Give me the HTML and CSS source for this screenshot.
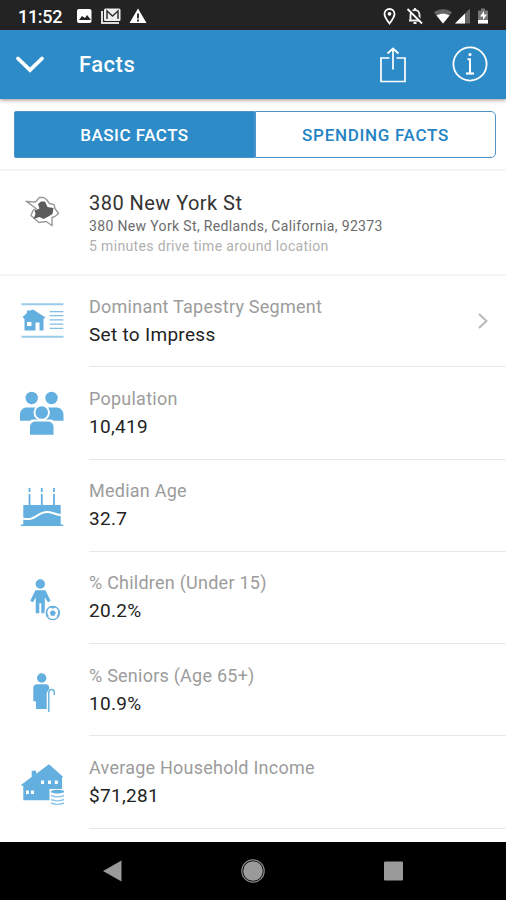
FILE: index.html
```
<!DOCTYPE html>
<html lang="en">

<head>
  <meta charset="UTF-8">
  <meta name="viewport" content="width=device-width, initial-scale=1.0">
  <title>Facts</title>
  <link rel="stylesheet" href="styles.css">
</head>

<body>

  <!-- Status bar -->
  <div class="status">
    <span class="clock">11:52</span>
    <svg class="status-left" width="74" height="20" viewBox="0 0 74 20">
      <rect x="1" y="3" width="14.500" height="14" rx="2" fill="#fff"/>
      <path d="M3 14l3-4 3 2 2-3 4 5z" fill="#222"/>
      <path d="M26 5v12h17" fill="none" stroke="#ddd" stroke-width="2"/>
      <rect x="28" y="2.500" width="16.500" height="12.500" rx="1.500" fill="#eee"/>
      <path d="M31 13V5l5.500 5L42 5v8" fill="none" stroke="#333" stroke-width="1.500"/>
      <path d="M62 2.500l8.500 14.500h-17z" fill="#fff"/>
      <path d="M62 7.500v5M62 13.500v2" stroke="#222" stroke-width="1.800"/>
    </svg>
    <svg class="status-right" width="112" height="20" viewBox="0 0 112 20">
      <path d="M9.500 17.500C6 13 4.500 10.500 4.500 8a5 5 0 0 1 10 0c0 2.500-1.500 5-5 9.500z" fill="none" stroke="#fff" stroke-width="1.800"/>
      <circle cx="9.500" cy="7.800" r="1.900" fill="#fff"/>
      <path d="M29 14.500h12M30.500 14V9c0-3 2-5 4.500-5s4.500 2 4.500 5v5M33.500 17h3M35 2v2" fill="none" stroke="#eee" stroke-width="1.900"/>
      <path d="M29 2.500l14 14" stroke="#222" stroke-width="2"/>
      <path d="M27.500 3l14.500 14.500" stroke="#fff" stroke-width="1.800"/>
      <path d="M54 6.500c5-4.200 13-4.200 18 0L63 17.500z" fill="#666"/>
      <path d="M56.500 9.500c4-2.500 9-2.500 13 0l-6.500 8z" fill="#fff"/>
      <path d="M90 2.500v15H75z" fill="#666"/>
      <path d="M85 7.500v10H75z" fill="#fff"/>
      <path d="M98 4.500h3v-2h4v2h3v13H98z" fill="#777"/>
      <path d="M98 14h10v3.500H98z" fill="#fff"/>
      <path d="M104 5l-4 5.500h3V14l4-5.500h-3z" fill="#fff"/>
    </svg>
  </div>

  <!-- App bar -->
  <header class="header">
    <svg class="down" width="30" height="20" viewBox="0 0 30 20">
      <path d="M3 3.500l12 11.500 12-11.500" fill="none" stroke="#fff" stroke-width="3.800" stroke-linecap="round"/>
    </svg>
    <h1>Facts</h1>
    <svg class="share" width="28" height="38" viewBox="0 0 28 38">
      <path d="M10.500 12H2v23.500h24V12h-8.500M14 23.500V3M8.500 7.500L14 2.500l5.500 5" fill="none" stroke="#fff" stroke-width="1.700"/>
    </svg>
    <svg class="info" width="38" height="38" viewBox="0 0 38 38">
      <circle cx="19" cy="18" r="16.600" fill="none" stroke="#fff" stroke-width="1.800"/>
      <circle cx="19" cy="8.500" r="1.600" fill="#fff"/>
      <path d="M16.500 13.200h2.500v14" fill="none" stroke="#fff" stroke-width="2"/>
      <path d="M15 27.500h8" stroke="#fff" stroke-width="2.200"/>
    </svg>
  </header>

  <!-- Tabs -->
  <div class="tabs">
    <div class="tab active"><span>BASIC FACTS</span></div>
    <div class="tab"><span>SPENDING FACTS</span></div>
  </div>

  <!-- Location -->
  <section class="location">
    <svg class="area" width="36" height="34" viewBox="0 0 36 34">
      <path d="M1.500 6.500l9 .5 4-4.500h4l3 2 3 4 4.500 1 1 4 3.500 5-3.500 3-3 1v8l-6-4-7 1-8-7 2-5 3-2z" fill="#fff" stroke="#999" stroke-width="1.400"/>
      <path d="M13 9l3-2.500h4l2.500 5.500 6 1-1 6-5 3-4 2-4-2-6 2 2-5-1-3.500 5-2z" fill="#5c5c5c"/>
    </svg>
    <div>
      <h2>380 New York St</h2>
      <p class="address">380 New York St, Redlands, California, 92373</p>
      <p class="drive">5 minutes drive time around location</p>
    </div>
  </section>

  <!-- Facts list -->
  <main>
    <div class="fact">
      <svg class="icon" viewBox="0 0 48 48">
        <path d="M3.500 7.300h42M3.500 39.700h42" stroke="#9bcbea" stroke-width="2"/>
        <path d="M31.700 14.700h13.600M31.700 18.700h13.600M31.700 22.800h13.600M31.700 27.200h13.600M31.700 31.300h13.600" stroke="#84bce4" stroke-width="1.300"/>
        <path d="M4.500 20L9 16v-2.500h3.500L15 12.500l12.500 8-2 1.500v11.500h-4v-8h-4v8H6.500V22z" fill="#63afdf"/>
        <path d="M9 25h4.500v4H9z" fill="#fff"/>
      </svg>
      <div class="fact-text">
        <p class="label">Dominant Tapestry Segment</p>
        <p class="value">Set to Impress</p>
        <svg class="chevron" width="12" height="18" viewBox="0 0 12 18">
          <path d="M2 2l7.500 7L2 16" fill="none" stroke="#b8b8b8" stroke-width="2"/>
        </svg>
      </div>
    </div>

    <div class="fact">
      <svg class="icon" viewBox="0 0 48 48">
        <g fill="#63afdf">
          <circle cx="13.700" cy="9" r="6.200"/>
          <circle cx="33.500" cy="9" r="6.200"/>
          <path d="M2 31.700V26c0-5 3-7.500 7-7.500h29c4 0 7.500 2.500 7.500 7.500v5.700z"/>
        </g>
        <circle cx="23.700" cy="23.500" r="8.200" fill="#fff"/>
        <path d="M10.500 35c0-3 2-4.500 5-4.500h16.500c3 0 5 1.500 5 4.500z" fill="#fff"/>
        <circle cx="23.700" cy="23.500" r="6.300" fill="#63afdf"/>
        <path d="M12 45.700V38c0-3.500 2.500-5.500 6-5.500h11.500c3.500 0 6 2 6 5.500v7.700z" fill="#63afdf"/>
      </svg>
      <div class="fact-text">
        <p class="label">Population</p>
        <p class="value">10,419</p>
      </div>
    </div>

    <div class="fact">
      <svg class="icon" viewBox="0 0 48 48">
        <path d="M5.300 42.500V23h37.400v19.500h2.600v1.500H2.700v-1.500z" fill="#63afdf"/>
        <path d="M11.500 12v12M23.800 12v12M36 12v12M11.500 6v4M23.800 6v4M36 6v4" stroke="#63afdf" stroke-width="1.800"/>
        <path d="M5 36.500c13 3 14-7 25-6.500 5 .3 8 3 13 3" fill="none" stroke="#fff" stroke-width="2"/>
      </svg>
      <div class="fact-text">
        <p class="label">Median Age</p>
        <p class="value">32.7</p>
      </div>
    </div>

    <div class="fact">
      <svg class="icon" viewBox="0 0 48 48">
        <circle cx="22.300" cy="10" r="4.700" fill="#63afdf"/>
        <path d="M17.500 16.300h10l5 10.500-2.500 1.500-3.200-5v16h-3.500v-10h-2v10h-3.600v-16l-2.700 5-2.800-1.500z" fill="#63afdf"/>
        <circle cx="34.800" cy="39" r="8.500" fill="#fff"/>
        <circle cx="34.800" cy="39" r="6.600" fill="#fff" stroke="#63afdf" stroke-width="1.300"/>
        <path d="M34.800 36l3 2.200-1.200 3.500H33l-1.200-3.500z" fill="#63afdf"/>
        <path d="M32 32.500l2.800 1.500 2.800-1.500M40.800 36v3.500l-1.500 3M28.800 36v3.500l1.500 3M33 45.500h3.600" fill="none" stroke="#63afdf" stroke-width="1.200"/>
      </svg>
      <div class="fact-text">
        <p class="label">% Children (Under 15)</p>
        <p class="value">20.2%</p>
      </div>
    </div>

    <div class="fact">
      <svg class="icon" viewBox="0 0 48 48">
        <circle cx="23.700" cy="12" r="4.700" fill="#63afdf"/>
        <path d="M15.300 35V22c0-2.500 1.500-3.700 4-3.700h8.500c2 0 3.500 1.500 3.500 4L28.700 27v16H18v-7.500z" fill="#63afdf"/>
        <path d="M30.800 46V26.500c0-4 5.500-4 5.500 0V29" fill="none" stroke="#63afdf" stroke-width="1.400"/>
      </svg>
      <div class="fact-text">
        <p class="label">% Seniors (Age 65+)</p>
        <p class="value">10.9%</p>
      </div>
    </div>

    <div class="fact">
      <svg class="icon" viewBox="0 0 48 48">
        <path d="M2.700 27.300l9.500-7.300 1.500-1V12.700h4.500v3L31 6.300l14 12.400-1 1.300v22.300H5.300V28z" fill="#63afdf"/>
        <path d="M8 32.500h3V36H8zM13 32.500h3V36h-3zM23 22.500h3V26h-3zM30 22.500h3V26h-3zM36.800 22.500h3V26h-3zM31.500 31h16v16h-16z" fill="#fff"/>
        <path d="M33 33.500c4 1.700 9 1.700 13 0M33 37.500c4 1.700 9 1.700 13 0M33 41.500c4 1.700 9 1.700 13 0M33 45c4 1.700 9 1.700 13 0" fill="none" stroke="#8dc4ea" stroke-width="1.400"/>
        <ellipse cx="39.500" cy="33.500" rx="6.500" ry="1.700" fill="#63afdf"/>
      </svg>
      <div class="fact-text">
        <p class="label">Average Household Income</p>
        <p class="value">$71,281</p>
      </div>
    </div>
  </main>

  <!-- System navigation -->
  <nav class="nav">
    <svg width="24" height="24" viewBox="0 0 24 24">
      <path d="M2 12L20.500 1.500v21z" fill="#9a9a9a"/>
    </svg>
    <svg width="24" height="24" viewBox="0 0 24 24">
      <circle cx="12" cy="12" r="11.200" fill="none" stroke="#8a8a8a" stroke-width="1.200"/>
      <circle cx="12" cy="12" r="9.800" fill="#9a9a9a"/>
    </svg>
    <svg width="24" height="24" viewBox="0 0 24 24">
      <rect x="3" y="2.500" width="19" height="19" rx="1" fill="#9a9a9a"/>
    </svg>
  </nav>

</body>

</html>
```
FILE: styles.css
```
* {
  box-sizing: border-box;
}

body {
  margin: 0;
  height: 900px;
  overflow: hidden;
  display: flex;
  flex-direction: column;
  font-family: Roboto, "Liberation Sans", sans-serif;
  background-color: #fff;
}

h1,
h2,
p {
  margin: 0;
  white-space: nowrap;
}

.status {
  display: flex;
  align-items: center;
  height: 30px;
  padding: 2px 14px 0 18px;
  background-color: #232323;
  color: #fff;
}

.clock {
  width: 58px;
  font-size: 18px;
  font-weight: 500;
  letter-spacing: -0.3px;
}

.status-right {
  margin-left: auto;
}

.header {
  display: flex;
  align-items: center;
  height: 69px;
  padding: 0 17px 0 15px;
  background-color: #2d8bc8;
  color: #fff;
  box-shadow: 0 1px 4px rgba(60, 30, 30, 0.5);
}

.header h1 {
  margin-left: 34px;
  font-size: 22px;
  line-height: 26px;
  font-weight: 500;
  letter-spacing: 0.5px;
}

.share {
  margin-left: auto;
  margin-right: 44px;
}

.tabs {
  display: flex;
  height: 72px;
  padding: 12px 10px 12px 14px;
  border-bottom: 2px solid #f5f5f5;
}

.tab {
  flex: 1;
  display: flex;
  align-items: center;
  justify-content: center;
  height: 47px;
  border: 1px solid #4b94cb;
  border-radius: 0 5px 5px 0;
  color: #2383c4;
  font-size: 17px;
  font-weight: 500;
  letter-spacing: 0.7px;
}

.tab.active {
  border-radius: 2px 0 0 2px;
  background-color: #2d8bc8;
  color: #fff;
  letter-spacing: 0.5px;
}

.location {
  display: flex;
  height: 105px;
  padding-top: 20px;
  border-bottom: 2px solid #f5f5f5;
}

.area {
  width: 36px;
  margin: 4px 28px 0 25px;
}

.location h2 {
  font-size: 20px;
  line-height: 24px;
  font-weight: 400;
  letter-spacing: 0.45px;
  color: #333;
}

.address {
  font-size: 14px;
  line-height: 22px;
  letter-spacing: 0.35px;
  color: #6c6c6c;
}

.drive {
  font-size: 14px;
  line-height: 18px;
  letter-spacing: 0.35px;
  color: #b0b0b0;
}

main {
  flex: 1;
  margin-top: -1px;
}

.fact {
  display: flex;
  height: 92.3px;
}

.icon {
  width: 48px;
  height: 48px;
  margin: 22px 23px 0 18px;
}

.fact-text {
  position: relative;
  flex: 1;
  padding-top: 17.5px;
  border-bottom: 1px solid #e8e8e8;
}

.label {
  font-size: 18px;
  line-height: 28px;
  letter-spacing: 0.24px;
  color: #9c9c9c;
}

.value {
  font-size: 19px;
  line-height: 28px;
  letter-spacing: 0.3px;
  color: #222;
}

.chevron {
  position: absolute;
  right: 17px;
  top: 37px;
}

.nav {
  display: flex;
  align-items: center;
  justify-content: space-between;
  height: 58px;
  padding: 0 101px;
  background-color: #000;
}
```
